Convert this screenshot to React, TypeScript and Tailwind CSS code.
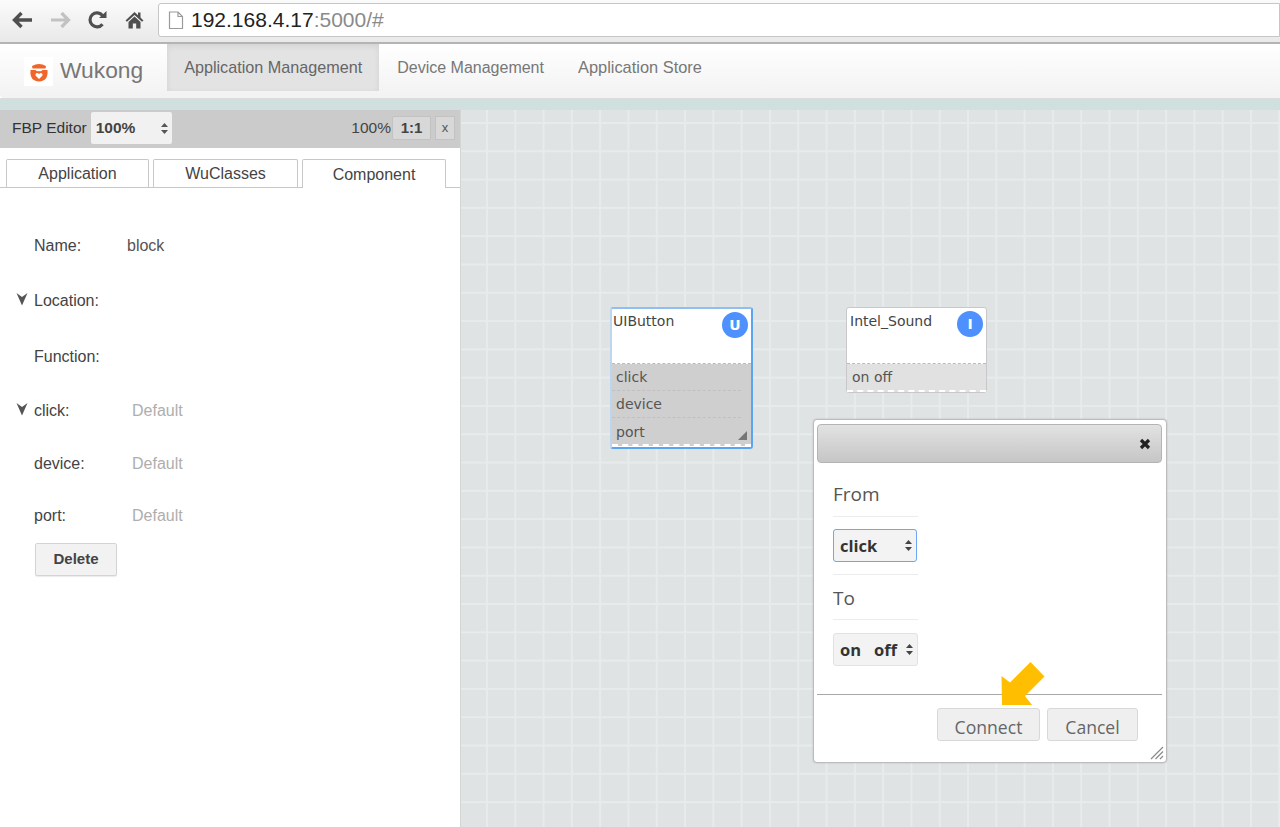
import * as React from "react"

const sans = "font-['Liberation_Sans',Arial,sans-serif]"
const open = "font-['Open_Sans',sans-serif]"
const deja = "font-['DejaVu_Sans',sans-serif]"

function BrowserBar() {
  return (
    <div className="flex h-[44px] items-start border-b-2 border-[#b4b4b4] bg-gradient-to-b from-[#fbfbfb] to-[#e9e9e9]">
      <div className="flex h-[42px] w-[158px] items-center pl-[12px] pb-[2px]">
        <svg width="21" height="18" viewBox="0 0 21 18" className="mr-[17px]">
          <path d="M9.5 2 L2.5 9 L9.5 16 M3 9 H20" fill="none" stroke="#4f4f4f" strokeWidth="3.4" />
        </svg>
        <svg width="21" height="18" viewBox="0 0 21 18" className="mr-[16px]">
          <path d="M11.5 2 L18.5 9 L11.5 16 M18 9 H1" fill="none" stroke="#c2c2c2" strokeWidth="3.2" />
        </svg>
        <svg width="21" height="20" viewBox="0 0 21 20" className="mr-[17px]">
          <path d="M15.5 14.2 A7 7 0 1 1 15.6 5.6" fill="none" stroke="#4f4f4f" strokeWidth="3.2" />
          <path d="M12 8 L19.5 8 L19.5 1 Z" fill="#4f4f4f" />
        </svg>
        <svg width="19" height="18" viewBox="0 0 19 18">
          <path d="M0.5 9.5 L9.5 1 L13 4.2 V1.5 H15.5 V6.5 L18.5 9.5 L17 10.8 L9.5 4 L2 10.8 Z" fill="#4f4f4f" />
          <path d="M3.5 11 L9.5 5.5 L15.5 11 V17.5 H11.2 V12.5 H7.8 V17.5 H3.5 Z" fill="#4f4f4f" />
        </svg>
      </div>
      <div className="mt-[3px] flex h-[34px] flex-1 items-center rounded-l-[3px] border border-[#c6c6c6] bg-white pl-[9px]">
        <svg width="16" height="19" viewBox="0 0 16 19">
          <path d="M1.5 1 H10 L14.5 5.5 V17.5 H1.5 Z M10 1 V5.5 H14.5" fill="#fff" stroke="#9a9a9a" strokeWidth="1.2" />
        </svg>
        <span className={`${sans} ml-[7px] text-[21px] text-[#222]`}>
          192.168.4.17<span className="text-[#8a8a8a]">:5000/#</span>
        </span>
      </div>
    </div>
  )
}

function NavBar() {
  return (
    <div className={`${sans} flex h-[54px] items-start rounded-l-[4px] bg-gradient-to-b from-white to-[#f2f2f2] pl-[24px]`}>
      <div className="mt-[13px] flex h-[29px] w-[29px] items-center justify-center bg-white">
        <svg width="20" height="20" viewBox="0 0 20 20">
          <path d="M3 4 Q10 0 17 4 L16.5 6.5 H3.5 Z" fill="#f0662a" />
          <path d="M1.5 8 H6.5 Q8 10 10 9 Q12 10 13.5 8 H18.5 Q19.5 19 10 19.5 Q0.5 19 1.5 8 Z" fill="#f0662a" />
          <path d="M10 17 L6.5 13.5 Q6 10.5 8.5 11 L10 12 L11.5 11 Q14 10.5 13.5 13.5 Z" fill="#fff" />
        </svg>
      </div>
      <span className="ml-[7px] mt-[9px] text-[22.8px] text-[#777]">Wukong</span>
      <div className="ml-[24px] flex h-[47px] w-[212px] items-center justify-center bg-[#e3e3e3] text-[16.2px] text-[#666] shadow-[inset_0_2px_6px_rgba(0,0,0,0.08)]">
        Application Management
      </div>
      <span className="ml-[18px] mt-[12px] text-[16px] text-[#777]">Device Management</span>
      <span className="ml-[34px] mt-[11px] text-[16.4px] text-[#777]">Application Store</span>
    </div>
  )
}

function Tab({ label, active }: { label: string; active?: boolean }) {
  return (
    <div
      className={
        active
          ? "relative z-10 -mb-[1px] flex h-[29px] items-center justify-center rounded-t-[2px] border border-b-0 border-[#c8c8c8] bg-white pt-[2px] text-[16px] text-[#444]"
          : "flex h-[28px] items-center justify-center rounded-t-[2px] border border-b-0 border-[#c8c8c8] bg-white text-[16px] text-[#444]"
      }
    >
      {label}
    </div>
  )
}

function Caret() {
  return (
    <svg width="12" height="14" viewBox="0 0 12 14" className="absolute left-[-18px] top-[0px]">
      <path d="M0.5 1 L6 5 L11.5 1 L6 13.5 Z" fill="#555" />
    </svg>
  )
}

function Field({ label, value, muted, caret, className }: { label: string; value?: string; muted?: boolean; caret?: boolean; className: string }) {
  return (
    <div className={`relative flex h-[18px] items-center text-[16px] ${className}`}>
      {caret && <Caret />}
      <span className="text-[#444]">{label}</span>
      {value && (
        <span className={muted ? "absolute left-[98px] text-[#aeaeae]" : "absolute left-[93px] text-[#555]"}>{value}</span>
      )}
    </div>
  )
}

function SidePanel() {
  return (
    <div className={`${sans} w-[461px] shrink-0 border-r border-[#d4d4d4] bg-white`}>
      <div className="flex h-[38px] items-center bg-[#cbcbcb] pl-[12px] pr-[5px] pb-[2px]">
        <span className="text-[15.5px] text-[#333]">FBP Editor</span>
        <div className="ml-[4px] flex h-[32px] w-[81px] items-center justify-between rounded-[2px] bg-[#f1f1f1] pl-[5px] pr-[2px]">
          <span className="text-[15.5px] font-bold text-[#444]">100%</span>
          <svg width="9" height="13" viewBox="0 0 9 13" className="mr-[1px]">
            <path d="M4.5 1 L8 5 H1 Z M4.5 12 L8 8 H1 Z" fill="#555" />
          </svg>
        </div>
        <span className="ml-auto text-[15.5px] text-[#444]">100%</span>
        <div className="ml-[1px] flex h-[24px] w-[39px] items-center justify-center rounded-[2px] border border-[#c2c2c2] bg-[#d8d8d8] text-[15px] font-bold text-[#444]">1:1</div>
        <div className="ml-[4px] flex h-[24px] w-[20px] items-center justify-center border border-[#c2c2c2] bg-[#d8d8d8] text-[13px] text-[#555]">x</div>
      </div>
      <div className="mt-[11px] grid h-[29px] grid-cols-[143px_145px_144px] items-end gap-x-[4px] border-b border-[#c8c8c8] pl-[6px] pr-[14px]">
        <Tab label="Application" />
        <Tab label="WuClasses" />
        <Tab label="Component" active />
      </div>
      <div className="flex flex-col pl-[34px]">
        <Field label="Name:" value="block" className="mt-[49px]" />
        <Field label="Location:" caret className="mt-[37px]" />
        <Field label="Function:" className="mt-[38px]" />
        <Field label="click:" value="Default" muted caret className="mt-[36px]" />
        <Field label="device:" value="Default" muted className="mt-[35px]" />
        <Field label="port:" value="Default" muted className="mt-[34px]" />
        <button className="ml-[1px] mt-[18px] h-[33px] w-[82px] rounded-[2px] border border-[#d4d4d4] bg-[#f2f2f2] text-[15px] font-bold text-[#444] shadow-[0_1px_1px_rgba(0,0,0,0.08)]">
          Delete
        </button>
      </div>
    </div>
  )
}

function Badge({ letter }: { letter: string }) {
  return (
    <div className="absolute right-[3px] top-[3px] flex h-[26px] w-[26px] items-center justify-center rounded-full bg-[#4d90fe] text-[14px] font-bold text-white">
      {letter}
    </div>
  )
}

function PortRow({ label, last }: { label: string; last?: boolean }) {
  return (
    <div className={`flex h-[27px] items-center pl-[4px] pt-[1px] ${last ? "" : "mr-[10px] border-b border-dashed border-[#c0c0c0]"}`}>
      {label}
    </div>
  )
}

function Nodes() {
  return (
    <>
      <div className={`${deja} absolute left-[149px] top-[197px] h-[142px] w-[143px] rounded-[3px] border-2 border-[#5aa5f0] border-l-[#bcd6ee] border-t-[#8fbff0] bg-white text-[14px] text-[#555]`}>
        <div className="relative h-[55px] border-b border-dashed border-[#bbb] pl-[1px] pt-[2px] text-[#444]">
          UIButton
          <Badge letter="U" />
        </div>
        <div className="relative h-[82px] border-b-2 border-dashed border-white bg-[#cfcfcf]">
          <PortRow label="click" />
          <PortRow label="device" />
          <PortRow label="port" last />
          <svg width="9" height="9" viewBox="0 0 9 9" className="absolute bottom-[4px] right-[4px]">
            <path d="M9 0 V9 H0 Z" fill="#777" />
          </svg>
        </div>
      </div>
      <div className={`${deja} absolute left-[385px] top-[197px] h-[86px] w-[141px] rounded-[3px] border border-[#c8c8c8] bg-white text-[14px] text-[#555]`}>
        <div className="relative h-[56px] border-b border-dashed border-[#bbb] pl-[3px] pt-[3px] text-[#444]">
          Intel_Sound
          <Badge letter="I" />
        </div>
        <div className="h-[28px] border-b-2 border-dashed border-white bg-[#e1e1e1]">
          <div className="flex h-[27px] items-center pl-[5px]">on off</div>
        </div>
      </div>
    </>
  )
}

function DialogSelect({ label, focused }: { label: string; focused?: boolean }) {
  return (
    <div className={`flex h-[33px] items-center justify-between rounded-[3px] border bg-[#f3f3f3] pl-[6px] pr-[3px] text-[16.5px] font-bold text-[#333] ${focused ? "w-[84px] border-[#6ea5f5]" : "w-[85px] border-[#e2e2e2]"}`}>
      <span className="whitespace-pre pt-[1px]">{label}</span>
      <svg width="9" height="13" viewBox="0 0 9 13">
        <path d="M4.5 1 L8 5 H1 Z M4.5 12 L8 8 H1 Z" fill="#444" />
      </svg>
    </div>
  )
}

function ConnectDialog() {
  return (
    <div className={`${open} absolute left-[352px] top-[309px] flex h-[344px] w-[354px] flex-col rounded-[4px] border border-[#bcbcbc] bg-white pl-[3px] pr-[4px] pt-[4px] shadow-[0_0_2px_rgba(0,0,0,0.2)]`}>
      <div className="flex h-[39px] shrink-0 items-center justify-end rounded-[4px] border border-[#b4b4b4] bg-gradient-to-b from-[#e2e2e2] to-[#c6c6c6] pr-[10px]">
        <svg width="12" height="12" viewBox="0 0 12 12">
          <path d="M2 2 L10 10 M10 2 L2 10" stroke="#222" strokeWidth="3.2" />
        </svg>
      </div>
      <div className="flex flex-col pl-[16px] text-[19px] text-[#555]">
        <div className="mt-[19px] h-[35px] w-[85px] border-b border-[#ececec] leading-[25px]">From</div>
        <div className="mt-[12px]">
          <DialogSelect label="click" focused />
        </div>
        <div className="mt-[12px] h-[46px] w-[85px] border-t border-b border-[#ececec] pt-[11px] leading-[25px]">To</div>
        <div className="mt-[13px]">
          <DialogSelect label="on   off" />
        </div>
      </div>
      <div className="mt-[28px] flex flex-1 items-start justify-end gap-[7px] border-t border-[#a8a8a8] pr-[24px] pt-[13px] text-[17.6px] text-[#666]">
        <button className="h-[33px] w-[103px] rounded-[3px] border border-[#d8d8d8] bg-[#efefef] pt-[5px] leading-[25px]">Connect</button>
        <button className="h-[33px] w-[91px] rounded-[3px] border border-[#d8d8d8] bg-[#efefef] pt-[5px] leading-[25px]">Cancel</button>
      </div>
      <svg width="14" height="14" viewBox="0 0 14 14" className="absolute bottom-[2px] right-[2px]">
        <path d="M13 1 L1 13 M13 5.5 L5.5 13 M13 10 L10 13" stroke="#8a8a8a" strokeWidth="1.2" />
      </svg>
      <svg width="44" height="44" viewBox="0 0 44 44" className="absolute left-[187px] top-[242px]">
        <path d="M29.5 0 L43.5 14.5 L24 34 L31 43 L1 43 L0.5 14 L9 20.5 Z" fill="#ffbf00" />
      </svg>
    </div>
  )
}

export default function App() {
  return (
    <div className="flex h-[827px] w-[1280px] flex-col overflow-hidden bg-white">
      <BrowserBar />
      <NavBar />
      <div className="h-[12px] border-t border-[#dcdcdc] bg-[#cfe0df]" />
      <div className="flex min-h-0 flex-1">
        <SidePanel />
        <div className="relative flex-1 bg-[#dfe3e3] bg-[linear-gradient(#e8ebeb_2px,transparent_2px),linear-gradient(90deg,#e8ebeb_2px,transparent_2px)] bg-[size:28.3px_28.3px] bg-[position:25px_12px]">
          <Nodes />
          <ConnectDialog />
        </div>
      </div>
    </div>
  )
}
